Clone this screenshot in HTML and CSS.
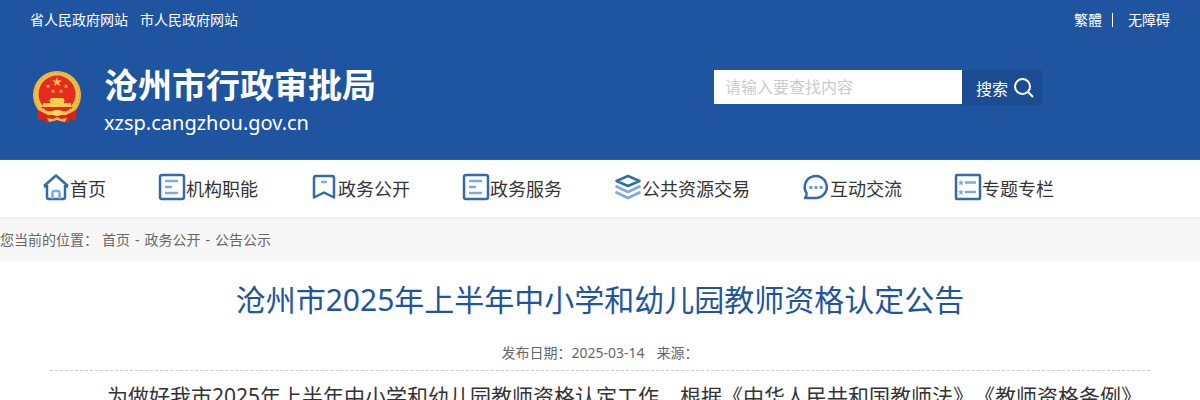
FILE: index.html
```html
<!DOCTYPE html>
<html lang="zh-CN">
<head>
<meta charset="utf-8">
<title>沧州市2025年上半年中小学和幼儿园教师资格认定公告</title>
<link rel="stylesheet" href="styles.css">
</head>
<body>
<header class="header">
  <div class="topbar">
    <div class="sites"><a href="#">省人民政府网站</a><a href="#">市人民政府网站</a></div>
    <div class="tools"><a href="#">繁體</a><span class="bar"></span><a href="#">无障碍</a></div>
  </div>
  <div class="banner">
    <a class="brand" href="#">
      <svg class="emblem" viewBox="0 0 50 54" aria-hidden="true">
        <path d="M5 35L6 50l6-1 2 4 11-3 11 3 2-4 6 1 1-15z" fill="#d9231c"/>
        <circle cx="25" cy="25" r="24" fill="#f0bd45"/>
        <circle cx="25" cy="25" r="22.5" fill="none" stroke="#dc9f35" stroke-dasharray="2 2"/>
        <circle cx="25" cy="24" r="18.500" fill="#e62b20"/>
        <path d="M25 7l1.200 3.500h3.600l-2.900 2.200 1.100 3.600-3-2.200-3 2.200 1.100-3.600-2.900-2.200h3.600z" fill="#f8cf4d"/>
        <g fill="#f3b646">
          <path id="s" d="M16 14l.6 1.500h1.700l-1.300 1 .5 1.700-1.500-1-1.500 1 .5-1.700-1.300-1h1.700z"/>
          <use href="#s" x="18"/><use href="#s" x="5" y="5"/><use href="#s" x="13" y="5"/>
        </g>
        <path d="M19 28h12l2 3h-1v2h7v4H11v-4h7v-2h-1z" fill="#f8cf4d"/>
        <path d="M9 37h32l-5 6H14z" fill="#e0281e"/>
        <path d="M11 38c5 6 9 2 14 2s9 4 14-2l2 4c-5 5-10 4-13 3l-3 2-3-2c-3 1-8 2-13-3z" fill="#f6c74b"/>
        <path d="M6 40l8 4 4 2-3 6-3-3-6 1zM44 40l-8 4-4 2 3 6 3-3 6 1z" fill="#d9231c"/>
        <path d="M17 45h16l3 6-11-1-11 1z" fill="#d9231c"/>
        <ellipse cx="25" cy="43" rx="5" ry="3" fill="#f9d561"/>
        <path d="M15 48l6 1 4-2 4 2 6-1-2 4-5-1-3-1-3 1-5 1z" fill="#f2b844"/>
      </svg>
      <span class="names"><strong class="name">沧州市行政审批局</strong><span class="domain">xzsp.cangzhou.gov.cn</span></span>
    </a>
    <form class="search">
      <input class="query" type="text" placeholder="请输入要查找内容" aria-label="请输入要查找内容">
      <button class="submit" type="button">搜索
        <svg class="lens" viewBox="0 0 20 20" aria-hidden="true"><circle cx="8.500" cy="8.500" r="7.500"/><path d="M14 14l5 5"/></svg>
      </button>
    </form>
  </div>
</header>
<nav class="nav">
  <a class="item" href="#"><svg class="icon" viewBox="0 0 28 28" aria-hidden="true"><path d="M5 12v12q0 2 2 2h14q2 0 2-2V12M2 13.500h3M26 13.500h-3M2 13L14 2.500 26 13" /><path class="soft" d="M10.500 26v-6q0-2 2-2h3q2 0 2 2v6"/></svg>首页</a>
  <a class="item" href="#"><svg class="icon" viewBox="0 0 28 28" aria-hidden="true"><rect x="2" y="2" width="24" height="24" rx="2"/><path class="soft" d="M7 8h13M7 14h7M7 20h13"/></svg>机构职能</a>
  <a class="item" href="#"><svg class="icon" viewBox="0 0 28 28" aria-hidden="true"><path d="M4 24.500V5q0-2 2-2h16q2 0 2 2v19.500l-10-5z"/><path class="soft" d="M11 9h6"/></svg>政务公开</a>
  <a class="item" href="#"><svg class="icon" viewBox="0 0 28 28" aria-hidden="true"><rect x="2" y="2" width="24" height="24" rx="2"/><path class="soft" d="M7 8h13M7 14h7M7 20h13"/></svg>政务服务</a>
  <a class="item" href="#"><svg class="icon" viewBox="0 0 28 28" aria-hidden="true"><path d="M2.500 8L14 3 25.500 8 14 13z"/><path class="soft" d="M1.500 13L14 19l12.500-6M1.500 19L14 25l12.500-6"/></svg>公共资源交易</a>
  <a class="item" href="#"><svg class="icon" viewBox="0 0 28 28" aria-hidden="true"><path d="M3 25h11.500A11 11 0 1 0 4.500 20q.5 3-1.500 5z"/><path class="dots" d="M7.500 14.500h3M12.500 14.500h3M17.500 14.500h3"/></svg>互动交流</a>
  <a class="item" href="#"><svg class="icon" viewBox="0 0 28 28" aria-hidden="true"><rect x="2" y="2" width="24" height="24" rx="1"/><path class="soft" d="M11 9.500h11M11 19h11"/><path class="star" d="M7 6.500l.8 2.200H10l-1.700 1.500.6 2.300L7 11.200l-1.900 1.300.6-2.300L4 8.700h2.200zM7 16l.8 2.200H10l-1.700 1.500.6 2.300L7 20.700 5.100 22l.6-2.300L4 18.200h2.200z"/></svg>专题专栏</a>
</nav>
<div class="crumbs">您当前的位置：<span class="trail"><a href="#">首页</a><span>-</span><a href="#">政务公开</a><span>-</span><a href="#">公告公示</a></span></div>
<main class="article">
  <h1 class="title">沧州市2025年上半年中小学和幼儿园教师资格认定公告</h1>
  <div class="meta"><span>发布日期：2025-03-14</span><span>来源：</span></div>
  <p class="text">为做好我市2025年上半年中小学和幼儿园教师资格认定工作，根据《中华人民共和国教师法》《教师资格条例》</p>
</main>
</body>
</html>
```
FILE: styles.css
```css
* { box-sizing: border-box; }
html { overflow: hidden; }
body {
  margin: 0;
  background: #fff;
  color: #333;
  font-family: "Noto Sans", "Noto Sans CJK SC", sans-serif;
  font-size: 14px;
  text-spacing-trim: space-all;
}
a { color: inherit; text-decoration: none; }
.header { background: #1f55a0; color: #fff; padding-bottom: 20px; }
.topbar { display: flex; justify-content: space-between; padding: 0 30px; line-height: 40px; }
.sites { display: flex; gap: 12px; }
.tools { display: flex; align-items: center; }
.bar { width: 1px; height: 14px; margin: 0 15px 0 10px; background: #fff; }
.banner { display: flex; justify-content: space-between; padding: 20px 158px 0 32px; }
.brand { display: flex; align-items: flex-start; gap: 22px; }
.emblem { width: 50px; height: 54px; margin-top: 10px; }
.names { display: flex; flex-direction: column; height: 80px; }
.name { font-size: 34px; line-height: 50px; }
.domain { font-size: 20px; line-height: 26px; }
.search { display: flex; align-items: flex-start; padding-top: 10px; }
.query {
  width: 248px;
  height: 34px;
  padding: 0 11px;
  border: 0;
  font: inherit;
  font-size: 16px;
}
.query::placeholder { color: #ccc; opacity: 1; }
.submit {
  display: flex;
  align-items: center;
  justify-content: flex-end;
  gap: 6px;
  width: 80px;
  height: 35px;
  padding: 0 8px 0 0;
  border: 0;
  background: #1b4c91;
  color: #fff;
  font: inherit;
  font-size: 16px;
}
.lens { width: 20px; height: 20px; fill: none; stroke: #fff; stroke-width: 2; }
.nav {
  display: flex;
  gap: 52px;
  height: 57px;
  padding-left: 42px;
  font-size: 18px;
  line-height: 58px;
  box-shadow: 0 1px 2px #e8e8e8;
  position: relative;
}
.item { display: flex; align-items: flex-start; white-space: nowrap; }
.icon { width: 28px; height: 28px; margin-top: 13px; fill: none; stroke: #346aaa; stroke-width: 2.5; stroke-linejoin: round; }
.icon .soft { stroke: #7fa9df; }
.icon .dots { stroke: #6b9ad8; stroke-width: 3; }
.icon .star { fill: #7fa9df; stroke: none; }
.crumbs { display: flex; gap: 4px; background: #f7f7f7; color: #666; line-height: 45px; }
.trail { display: flex; gap: 5px; }
.article { padding: 15px 50px 0; }
.title { margin: 0; color: #1f55a0; font-size: 30px; font-weight: 400; line-height: 46px; text-align: center; }
.meta {
  display: flex;
  justify-content: center;
  gap: 12px;
  padding-top: 13px;
  border-bottom: 1px dashed #ccc;
  color: #666;
  line-height: 34px;
}
.text { margin: 7px 0 0; text-indent: 57px; font-size: 21px; line-height: 36px; white-space: nowrap; }
```
